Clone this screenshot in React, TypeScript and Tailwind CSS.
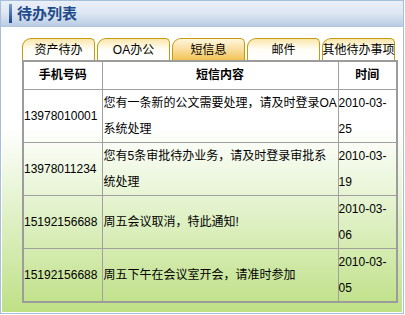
import React from "react";

const tabs = ["资产待办", "OA办公", "短信息", "邮件", "其他待办事项"];

const rows = [
  { phone: "13978010001", lines: ["您有一条新的公文需要处理，请及时登录OA", "系统处理"], date: "2010-03-25" },
  { phone: "13978011234", lines: ["您有5条审批待办业务，请及时登录审批系", "统处理"], date: "2010-03-19" },
  { phone: "15192156688", lines: ["周五会议取消，特此通知!"], date: "2010-03-06" },
  { phone: "15192156688", lines: ["周五下午在会议室开会，请准时参加"], date: "2010-03-05" },
];

const font = { fontFamily: '"Liberation Sans", "Noto Sans CJK SC", sans-serif' };

const Tab = ({ label, active }: { label: string; active: boolean }) => (
  <div
    className={
      "w-[73px] h-[22px] flex items-center justify-center text-[12px] text-black border border-b-0 border-[#c39a12] rounded-tl-[9px] rounded-tr-[5px] whitespace-nowrap " +
      (active
        ? "bg-gradient-to-b from-[#fff6dc] to-[#f2c453]"
        : "bg-gradient-to-b from-[#fbe7ab] via-[#fffdf5] to-white")
    }
  >
    {label}
  </div>
);

export default function App() {
  return (
    <div className="w-[405px] h-[315px] bg-white" style={font}>
      <div className="w-[404px] h-[314px] border border-[#a9bfd9] flex flex-col">
        <div className="h-[26px] flex items-center border-b border-[#b3c6de] bg-gradient-to-b from-[#eaf0f8] via-[#dde6f2] to-[#b9cce5]">
          <div className="ml-[8px] w-[3px] h-[19px] bg-gradient-to-b from-[#7b9ccd] to-[#1d4689]" />
          <span className="ml-[5px] text-[15px] font-bold text-[#1f4b8a] leading-none">待办列表</span>
        </div>
        <div className="flex-1 border border-white bg-gradient-to-b from-white from-[35%] to-[#bfe085] pt-[10px] pl-[20px]">
          <div className="flex gap-[2px]">
            {tabs.map((t, i) => (
              <Tab key={t} label={t} active={i === 2} />
            ))}
          </div>
          <table className="table-fixed border-collapse border-2 border-[#9c9c9c] w-[374px] text-[12px] text-black">
            <colgroup>
              <col className="w-[79px]" />
              <col className="w-[236px]" />
              <col className="w-[59px]" />
            </colgroup>
            <thead>
              <tr className="h-[28px]">
                <th className="border border-[#a0a0a0] font-bold">手机号码</th>
                <th className="border border-[#a0a0a0] font-bold">短信内容</th>
                <th className="border border-[#a0a0a0] font-bold">时间</th>
              </tr>
            </thead>
            <tbody>
              {rows.map((r, i) => (
                <tr key={i} className="h-[52px]">
                  <td className="border border-[#a0a0a0] px-0 leading-[26px] align-middle">{r.phone}</td>
                  <td className="border border-[#a0a0a0] pl-[1px] pr-0 leading-[26px] align-middle whitespace-nowrap">
                    {r.lines.map((l, j) => (
                      <div key={j}>{l}</div>
                    ))}
                  </td>
                  <td className="border border-[#a0a0a0] px-0 leading-[26px] align-middle">
                    {r.date.slice(0, 8)}
                    <br />
                    {r.date.slice(8)}
                  </td>
                </tr>
              ))}
            </tbody>
          </table>
        </div>
      </div>
    </div>
  );
}
